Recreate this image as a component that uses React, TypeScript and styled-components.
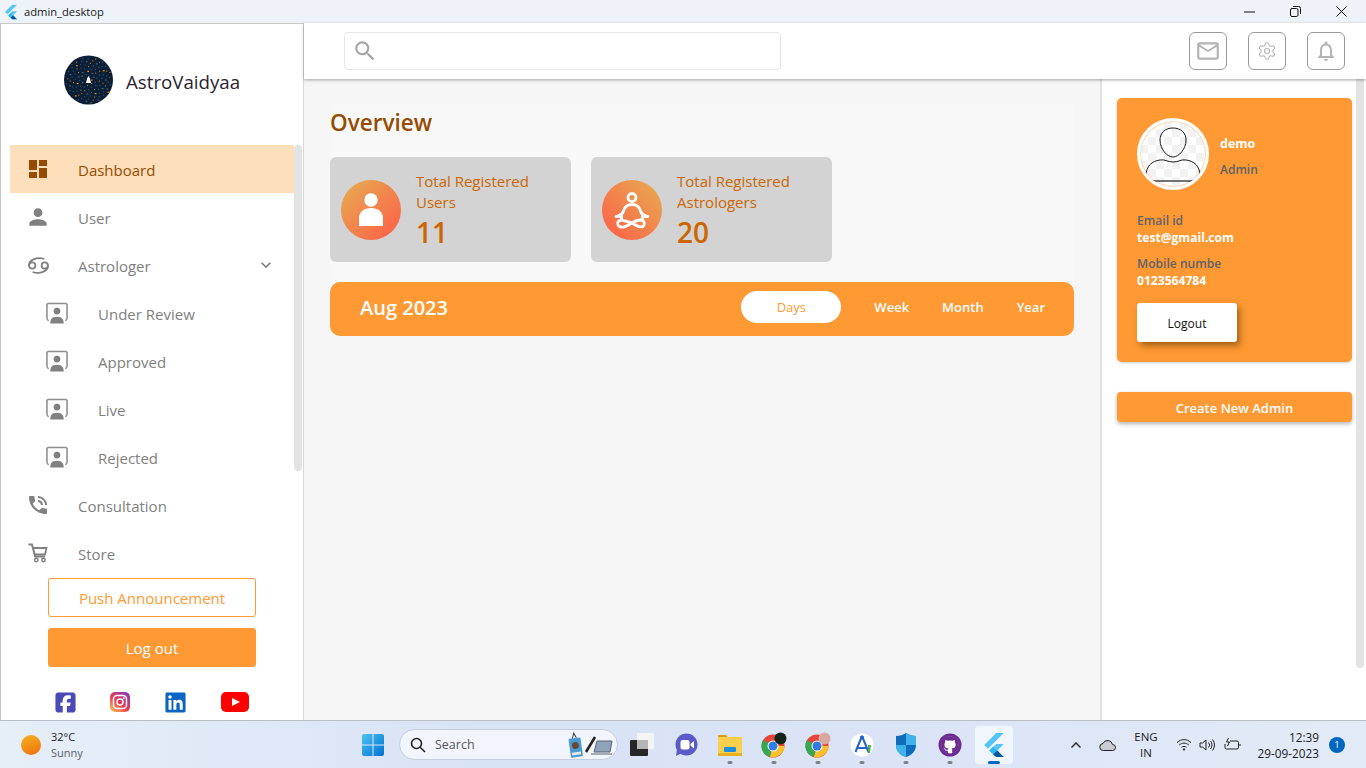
import React from "react";
import styled, { createGlobalStyle } from "styled-components";
import {
  MdDashboard,
  MdPerson,
  MdPhoneInTalk,
  MdKeyboardArrowDown,
  MdOutlineEmail,
  MdOutlineNotifications,
  MdSearch,
} from "react-icons/md";
import { TbZodiacCancer } from "react-icons/tb";
import { FaLinkedin, FaGithub } from "react-icons/fa";
import { FaSquareFacebook } from "react-icons/fa6";
import { Settings } from "lucide-react";

const GlobalStyle = createGlobalStyle`
  html, body { margin: 0; padding: 0; height: 100%; overflow: hidden; }
  body { font-family: "Open Sans", "Noto Sans", sans-serif; background: #fff; }
  * { box-sizing: border-box; }
`;

const ORANGE = "#ff9933";

const Shell = styled.div`
  display: flex;
  flex-direction: column;
  width: 1366px;
  height: 768px;
  overflow: hidden;
`;

const TitleBar = styled.div`
  height: 23px;
  flex: none;
  display: flex;
  align-items: center;
  background: #eef3fa;
  padding: 0 2px 0 3px;
  font-size: 11.2px;
  color: #1a1a1a;
`;

const TitleText = styled.span`
  margin-left: 5px;
  flex: 1;
`;

const WinButton = styled.div`
  width: 46px;
  height: 23px;
  display: flex;
  align-items: center;
  justify-content: center;
`;

const Main = styled.div`
  flex: 1;
  display: flex;
  min-height: 0;
`;

const Sidebar = styled.aside`
  position: relative;
  width: 304px;
  flex: none;
  background: #fff;
  border-left: 1px solid #c4c4c4;
  border-right: 1px solid #d8d8d8;
  border-top: 1px solid #c8c8c8;
  display: flex;
  flex-direction: column;
`;

const SideThumb = styled.div`
  position: absolute;
  left: 293px;
  top: 121px;
  width: 8px;
  height: 326px;
  border-radius: 4px;
  background: #e3e3e3;
`;

const Brand = styled.div`
  height: 121px;
  display: flex;
  align-items: center;
  padding: 0 0 10px 63px;
  gap: 13px;
  flex: none;
  font-size: 18.7px;
  color: #2b2233;
`;

const BrandName = styled.span`
  margin-top: 4px;
`;

const Nav = styled.nav`
  padding-left: 9px;
  width: 293px;
  flex: none;
`;

const NavItem = styled.div<{ $active?: boolean; $sub?: boolean }>`
  height: 48px;
  display: flex;
  align-items: center;
  gap: 30px;
  padding-left: ${(p) => (p.$sub ? "36px" : "18px")};
  background: ${(p) => (p.$active ? "#fedfbb" : "transparent")};
  color: ${(p) => (p.$active ? "#964b00" : "#808080")};
  font-size: 15px;
`;

const NavLabel = styled.span`
  margin-top: 2px;
`;

const NavIcon = styled.span<{ $sub?: boolean }>`
  width: ${(p) => (p.$sub ? "22px" : "20px")};
  height: 22px;
  display: flex;
  align-items: center;
  justify-content: center;
  flex: none;
  svg { display: block; flex: none; }
`;

const NavChevron = styled.span`
  margin-left: auto;
  padding-right: 18px;
  display: flex;
  color: #808080;
`;

const SideButtons = styled.div`
  margin: 1px 0 0 47px;
  width: 208px;
  display: flex;
  flex-direction: column;
  gap: 11px;
`;

const SideButton = styled.button<{ $filled?: boolean }>`
  height: 39px;
  border-radius: 3px;
  border: 1px solid ${ORANGE};
  background: ${(p) => (p.$filled ? ORANGE : "#fff")};
  color: ${(p) => (p.$filled ? "#fff" : ORANGE)};
  font: inherit;
  font-size: 15px;
  padding: 0;
`;

const Socials = styled.div`
  margin: 25px 0 0 54px;
  display: flex;
  align-items: center;
  height: 20px;
  gap: 35px;
`;

const SocialSlot = styled.span<{ $wide?: boolean }>`
  width: ${(p) => (p.$wide ? "28px" : "20px")};
  margin-left: ${(p) => (p.$wide ? "1px" : "0")};
  height: 20px;
  display: flex;
  align-items: center;
  justify-content: center;
  svg { display: block; flex: none; }
`;

const Workspace = styled.div`
  flex: 1;
  display: flex;
  flex-direction: column;
  min-width: 0;
`;

const TopBar = styled.header`
  position: relative;
  z-index: 2;
  height: 56px;
  flex: none;
  background: #fff;
  display: flex;
  align-items: center;
  padding: 0 21px 0 40px;
  box-shadow: 0 1px 3px rgba(0, 0, 0, 0.35);
`;

const SearchBox = styled.div`
  width: 437px;
  height: 38px;
  border: 1px solid #e6e6e6;
  border-radius: 4px;
  display: flex;
  align-items: center;
  padding-left: 7px;
  color: #a6a6a6;
`;

const TopActions = styled.div`
  margin-left: auto;
  display: flex;
  gap: 21px;
`;

const ActionButton = styled.div`
  width: 38px;
  height: 38px;
  border: 1px solid #9a9a9a;
  border-radius: 6px;
  display: flex;
  align-items: center;
  justify-content: center;
  color: #b4b4b4;
`;

const Body = styled.div`
  flex: 1;
  display: flex;
  min-height: 0;
`;

const Center = styled.main`
  flex: 1;
  background: #f6f6f6;
  padding: 25px 26px 0;
  min-width: 0;
`;

const Panel = styled.div`
  background: #f8f8f8;
  display: flex;
  flex-direction: column;
`;

const Heading = styled.h1`
  margin: 0;
  height: 53px;
  line-height: 38px;
  font-size: 22.5px;
  font-weight: 600;
  color: #964b00;
`;

const StatRow = styled.div`
  display: flex;
  gap: 20px;
`;

const StatCard = styled.div`
  width: 241px;
  height: 105px;
  background: #d3d3d3;
  border-radius: 6px;
  display: flex;
  align-items: center;
  padding-left: 11px;
  gap: 15px;
`;

const StatBadge = styled.div<{ $flip?: boolean }>`
  width: 60px;
  height: 60px;
  flex: none;
  border-radius: 50%;
  background: linear-gradient(${(p) => (p.$flip ? "225deg" : "135deg")}, #e6ae52, #ff5c47);
  svg { display: block; }
`;

const StatText = styled.div`
  color: #cc6600;
  font-size: 15px;
  line-height: 21px;
  margin-top: 2px;
`;

const StatValue = styled.div`
  font-size: 28px;
  font-weight: 600;
  line-height: 38px;
`;

const DateBar = styled.div`
  margin-top: 20px;
  height: 54px;
  border-radius: 10px;
  background: ${ORANGE};
  display: flex;
  align-items: center;
  padding: 0 29px 0 30px;
  color: #fff;
`;

const DateLabel = styled.div`
  font-size: 20px;
  font-weight: 600;
  flex: 1;
  margin-bottom: 4px;
`;

const RangeTab = styled.div<{ $active?: boolean }>`
  width: ${(p) => (p.$active ? "100px" : "auto")};
  height: 32px;
  margin: 0 0 4px ${(p) => (p.$active ? "0" : "33px")};
  border-radius: 16px;
  display: flex;
  align-items: center;
  justify-content: center;
  font-size: 13px;
  font-weight: ${(p) => (p.$active ? 400 : 600)};
  background: ${(p) => (p.$active ? "#fff" : "transparent")};
  color: ${(p) => (p.$active ? ORANGE : "#fff")};
`;

const RightPanel = styled.section`
  position: relative;
  width: 266px;
  flex: none;
  background: #fff;
  border-left: 2px solid #e2e2e2;
  padding: 19px 0 0 15px;
`;

const RightThumb = styled.div`
  position: absolute;
  right: 2px;
  top: 0;
  width: 8px;
  height: 589px;
  background: #e3e3e3;
  border-radius: 0 0 4px 4px;
`;

const ProfileCard = styled.div`
  width: 235px;
  height: 264px;
  background: ${ORANGE};
  border-radius: 5px;
  padding: 20px;
  box-shadow: 0 1px 3px rgba(0, 0, 0, 0.2);
  display: flex;
  flex-direction: column;
`;

const ProfileHead = styled.div`
  display: flex;
  align-items: center;
  gap: 11px;
`;

const ProfileNames = styled.div`
  padding-top: 6px;
`;

const Avatar = styled.div`
  width: 72px;
  height: 72px;
  flex: none;
  border-radius: 50%;
  border: 3px solid #fff;
  box-shadow: inset 0 0 0 1px #fbd7ad;
  background-color: #fff;
  background-image: conic-gradient(#f2f2f2 25%, #fff 0 50%, #f2f2f2 0 75%, #fff 0);
  background-size: 16px 16px;
  overflow: hidden;
  svg { display: block; }
`;

const ProfileName = styled.div`
  color: #fff;
  font-size: 12.5px;
  font-weight: 700;
  line-height: 18px;
`;

const ProfileRole = styled.div`
  color: #5f6368;
  font-size: 12px;
  font-weight: 600;
  line-height: 18px;
  margin-top: 8px;
`;

const Fields = styled.div`
  margin-top: 22px;
  display: flex;
  flex-direction: column;
  gap: 9px;
`;

const Field = styled.div`
  font-size: 12.1px;
  font-weight: 600;
  line-height: 17px;
`;

const FieldLabel = styled.div`
  color: #5f6368;
`;

const FieldValue = styled.div`
  color: #fff;
  font-weight: 700;
`;

const LogoutButton = styled.button`
  margin-top: 14px;
  width: 100px;
  height: 39px;
  border: 0;
  border-radius: 3px;
  padding: 2px 0 0;
  background: #fff;
  color: #111;
  font: inherit;
  font-size: 12px;
  font-weight: 500;
  box-shadow: 3px 4px 6px rgba(120, 70, 10, 0.65);
`;

const CreateButton = styled.button`
  display: block;
  margin-top: 30px;
  width: 235px;
  height: 30px;
  border: 0;
  border-radius: 4px;
  padding: 1px 0 0;
  background: ${ORANGE};
  color: #fff;
  font: inherit;
  font-size: 13px;
  font-weight: 600;
  box-shadow: 0 2px 4px rgba(0, 0, 0, 0.3);
`;

const Taskbar = styled.footer`
  height: 48px;
  flex: none;
  position: relative;
  z-index: 3;
  display: flex;
  align-items: center;
  border-top: 1px solid #b9bdc5;
  background: linear-gradient(90deg, #e6eff8 0%, #d9e3f6 35%, #dbe4f7 65%, #e3ebf7 100%);
`;

const Weather = styled.div`
  width: 356px;
  flex: none;
  display: flex;
  align-items: center;
  gap: 10px;
  padding-left: 21px;
`;

const Sun = styled.div`
  width: 20px;
  height: 20px;
  border-radius: 50%;
  background: linear-gradient(160deg, #f2b21f, #f0700c);
`;

const WeatherText = styled.div`
  font-size: 11px;
  line-height: 16px;
  color: #1d1d1d;
`;

const WeatherSub = styled.div`
  color: #5b5f66;
`;

const TaskCenter = styled.div`
  display: flex;
  align-items: center;
  width: 664px;
  flex: none;
`;

const TaskIcon = styled.div<{ $active?: boolean; $open?: boolean }>`
  position: relative;
  width: 38px;
  height: 38px;
  margin-right: 6px;
  flex: none;
  display: flex;
  align-items: center;
  justify-content: center;
  border-radius: 4px;
  background: ${(p) => (p.$active ? "#f1f5fc" : "transparent")};
  svg { display: block; }
  &::after {
    content: "";
    display: ${(p) => (p.$open ? "block" : "none")};
    position: absolute;
    bottom: 0;
    left: 50%;
    transform: translateX(-50%);
    width: ${(p) => (p.$active ? "12px" : "5px")};
    height: 3px;
    border-radius: 2px;
    background: ${(p) => (p.$active ? "#0067c0" : "#7d828a")};
  }
`;

const StartIcon = styled(TaskIcon)`
  margin: 0 8px 0 -2px;
`;

const TaskSearch = styled.div`
  width: 219px;
  height: 31px;
  margin: 0 5px 0 -1px;
  border-radius: 16px;
  border: 1px solid #c6cddd;
  background: #f2f5fd;
  display: flex;
  align-items: center;
  padding-left: 10px;
  gap: 9px;
  font-size: 12.5px;
  color: #555;
  flex: none;
  svg { display: block; }
`;

const TaskSearchArt = styled.span`
  margin-left: auto;
  margin-right: 3px;
  display: flex;
`;

const Tray = styled.div`
  flex: 1;
  display: flex;
  align-items: center;
  color: #1c1c1c;
  svg { display: block; }
`;

const ChevronUp = styled.svg`
  margin-left: 50px;
`;

const TrayGlyph = styled.svg<{ $gap: number }>`
  margin-left: ${(p) => p.$gap}px;
`;

const Lang = styled.div`
  width: 30px;
  margin-left: 14px;
  text-align: center;
  font-size: 11.5px;
  line-height: 16px;
`;

const Clock = styled.div`
  width: 76px;
  margin-left: 2px;
  text-align: right;
  font-size: 11.8px;
  line-height: 16px;
  flex: none;
`;

const NoticeBadge = styled.div`
  width: 16px;
  height: 16px;
  margin-left: 10px;
  border-radius: 50%;
  background: #0067c0;
  color: #fff;
  font-size: 9.5px;
  display: flex;
  align-items: center;
  justify-content: center;
`;

const FlutterLogo = ({ size = 16 }: { size?: number }) => (
  <svg width={size} height={size} viewBox="0 0 24 24">
    <path d="M14 1 3 12l3.400 3.400L21 1z" fill="#54c5f8" />
    <path d="M14 11l-6.200 6.100 3.400 3.400 2.800 2.500H21l-6-6 6-6z" fill="#54c5f8" />
    <path d="M11.200 20.500 14 23h7l-6-6z" fill="#01579b" />
    <path d="M7.800 17.100 11.200 13.700l3.400 3.400-3.400 3.400z" fill="#29b6f6" />
  </svg>
);

const Stars = () => {
  const dots: React.ReactElement[] = [];
  for (let i = 0; i < 110; i++) {
    const a = i * 2.399;
    const r = 23 * Math.sqrt((i + 1) / 110);
    dots.push(
      <rect
        key={i}
        x={24.5 + r * Math.cos(a)}
        y={24.5 + r * Math.sin(a)}
        width={i % 5 === 0 ? 1.8 : 1}
        height={i % 5 === 0 ? 1.2 : 1}
        fill={i % 3 === 0 ? "#f08a1d" : "#46627c"}
      />
    );
  }
  return (
    <svg width="49" height="50" viewBox="0 0 49 50" style={{ flex: "none" }}>
      <circle cx="24.5" cy="25" r="24.5" fill="#0b2036" />
      {dots}
      <path d="M24.500 21l1.400 2.500 1.100 4.500h-5l1.100-4.500z" fill="#fff" />
    </svg>
  );
};

const ReviewIcon = () => (
  <svg width="22" height="23" viewBox="0 0 23 23" fill="none">
    <path d="M1 17.500V2.600A1.600 1.600 0 0 1 2.600 1h17.800A1.600 1.600 0 0 1 22 2.600v14.900" stroke="#8c8c8c" strokeWidth="1.600" />
    <path d="M1 17.500l1.800 1.500M22 17.500 20.200 19" stroke="#8c8c8c" strokeWidth="1.300" />
    <circle cx="11.500" cy="9" r="3.500" fill="#808080" />
    <path d="M4.500 22c0-4 1.500-7 7-7s7 3 7 7z" fill="#808080" />
  </svg>
);

const CartIcon = () => (
  <svg width="20" height="20" viewBox="0 0 20 20" fill="none" stroke="#808080">
    <path d="M.5 1.500h3.500L7.200 13.500H17" strokeWidth="2" />
    <path d="M5 5h13.500L17 11.500H7" strokeWidth="1.800" />
    <circle cx="8.300" cy="17" r="1.700" strokeWidth="1.500" />
    <circle cx="15.500" cy="17" r="1.700" strokeWidth="1.500" />
  </svg>
);

const InstagramIcon = () => (
  <svg width="20" height="20" viewBox="0 0 20 20">
    <defs>
      <linearGradient id="ig" x1="0.1" y1="1" x2="0.9" y2="0">
        <stop offset="0" stopColor="#fdc04f" />
        <stop offset="0.45" stopColor="#f0394f" />
        <stop offset="1" stopColor="#7b3bc4" />
      </linearGradient>
    </defs>
    <rect width="20" height="20" rx="5" fill="url(#ig)" />
    <rect x="3.500" y="3.500" width="13" height="13" rx="3.500" fill="none" stroke="#fff" strokeWidth="1.500" />
    <circle cx="10" cy="10" r="3" fill="none" stroke="#fff" strokeWidth="1.500" />
    <circle cx="13.800" cy="6.200" r="0.900" fill="#fff" />
  </svg>
);

const YoutubeIcon = () => (
  <svg width="28" height="20" viewBox="0 0 28 20">
    <rect width="28" height="20" rx="5" fill="#f00" />
    <path d="M11 6l8 4-8 4z" fill="#fff" />
  </svg>
);

const MeditationIcon = () => (
  <svg width="60" height="60" viewBox="0 0 60 60" fill="none" stroke="#fff" strokeWidth="2.800" strokeLinecap="round" strokeLinejoin="round">
    <circle cx="30" cy="17.500" r="4" />
    <path d="M30 24.500c-5 0-7.500 3-8.500 6.500-.8 3-2.500 4.500-7.500 5.500h5.500" />
    <path d="M30 24.500c5 0 7.500 3 8.500 6.500.8 3 2.500 4.500 7.500 5.500h-5.500" />
    <path d="M19.500 36.500c-1 2.500 1 4.500 4 4.500 3 .5 7 2 11 4.500 3 2 6.500 2 7.500-.5 1-3-1-5-3-5-4 0-8 2-11 4-3 2-6 4-9 3-3-.5-4-3.500-3-5 .5-1 1.500-1.500 2.500-1.500" />
    <path d="M40.500 36.500c.5 1.500 0 2.500-1 3.500" />
  </svg>
);

const UserBadgeIcon = () => (
  <svg width="60" height="60" viewBox="0 0 60 60" fill="#fff">
    <circle cx="30" cy="20" r="6.700" />
    <path d="M18 46V38c0-6 5-10 12-10s12 4 12 10v8z" />
  </svg>
);

const AvatarArt = () => (
  <svg width="66" height="66" viewBox="0 0 66 66" fill="none" stroke="#1b1b1b" strokeWidth="1">
    <path d="M33 7c-8 0-13 5-13 12 0 9 7 17 13 17s13-8 13-17c0-7-5-12-13-12z" />
    <path d="M6 55c0-10 6-15 14-16 5-1 7 2 13 2s8-3 13-2c8 1 14 6 14 16" />
    <path d="M12 60h41" strokeWidth="1.500" stroke="#444" />
  </svg>
);

const WindowsLogo = () => (
  <svg width="24" height="24" viewBox="0 0 24 24">
    <defs>
      <linearGradient id="win" x1="0" y1="0" x2="1" y2="1">
        <stop offset="0" stopColor="#4cc2f5" />
        <stop offset="1" stopColor="#0071cf" />
      </linearGradient>
    </defs>
    <path d="M1 3a2 2 0 0 1 2-2h8.500v10.500H1zM12.500 1H21a2 2 0 0 1 2 2v8.500H12.500zM1 12.500h10.500V23H3a2 2 0 0 1-2-2zM12.500 12.500H23V21a2 2 0 0 1-2 2h-8.500z" fill="url(#win)" />
  </svg>
);

const WidgetsIcon = () => (
  <svg width="24" height="24" viewBox="0 0 24 24">
    <rect x="0" y="7" width="18" height="16" rx="1" fill="#262626" />
    <rect x="7" y="0" width="17" height="16" rx="1" fill="#f4f4f4" />
    <rect x="7" y="7" width="11" height="9" fill="#b5b5b5" />
  </svg>
);

const MeetIcon = () => (
  <svg width="24" height="24" viewBox="0 0 24 24">
    <circle cx="12.500" cy="11.500" r="11" fill="#5a5ac8" />
    <path d="M3 16l-1 7 6-3z" fill="#5a5ac8" />
    <rect x="6.500" y="7" width="9" height="9.500" rx="2" fill="#fff" />
    <path d="M16.500 11l3.500-3v7.500l-3.500-3z" fill="#fff" />
  </svg>
);

const FolderIcon = () => (
  <svg width="24" height="24" viewBox="0 0 24 24">
    <path d="M0 3a1 1 0 0 1 1-1h7l2 2.500h-10z" fill="#d99a18" />
    <rect x="0" y="4" width="24" height="18" rx="1" fill="#f9cf4d" />
    <rect x="6" y="14" width="12" height="5" rx="1" fill="#1c8fdc" />
    <rect x="0" y="20" width="24" height="3" fill="#eab11f" />
  </svg>
);

const ChromeIcon = ({ dot }: { dot: string }) => (
  <svg width="26" height="26" viewBox="0 0 26 26">
    <circle cx="12" cy="14" r="11.500" fill="#e7453a" />
    <path d="M12 14 2 8A11.500 11.500 0 0 0 9 25z" fill="#35a853" />
    <path d="M12 14 23.500 14A11.500 11.500 0 0 1 9 25z" fill="#fbc02d" />
    <circle cx="12" cy="14" r="5.500" fill="#fff" />
    <circle cx="12" cy="14" r="4.500" fill="#2f7de1" />
    <circle cx="19.500" cy="6.500" r="6" fill={dot} />
  </svg>
);

const XcodeIcon = () => (
  <svg width="24" height="24" viewBox="0 0 24 24" fill="none">
    <circle cx="12" cy="12" r="11.500" fill="#fff" />
    <path d="M12 3l-6.500 16M12 3l6.500 16M7 15h10" stroke="#2563c9" strokeWidth="2" />
    <circle cx="12" cy="4.500" r="2" fill="#2563c9" />
    <path d="M18 12h3l-1 8h-2z" fill="#4caf50" />
  </svg>
);

const ShieldIcon = () => (
  <svg width="24" height="24" viewBox="0 0 24 24">
    <path d="M12 0c3 2 6 3 10 3v9c0 6-4 10-10 12C6 22 2 18 2 12V3c4 0 7-1 10-3z" fill="#0f6cbd" />
    <path d="M12 0c3 2 6 3 10 3v9H12zM2 12h10v12C6 22 2 18 2 12z" fill="#3fb2ec" />
  </svg>
);

const GithubBadge = () => (
  <svg width="24" height="24" viewBox="0 0 24 24">
    <circle cx="12" cy="12" r="11.500" fill="#6b2b8f" />
    <circle cx="12" cy="12" r="8.500" fill="#fff" />
    <foreignObject x="3" y="3" width="18" height="18">
      <FaGithub size={18} color="#6b2b8f" />
    </foreignObject>
  </svg>
);

const SearchArt = () => (
  <svg width="46" height="26" viewBox="0 0 46 26" fill="none">
    <g transform="rotate(-8 8 14)">
      <rect x="1.500" y="6" width="12" height="19" rx="1" fill="#4a9bd1" />
      <circle cx="7.500" cy="13.500" r="3.500" fill="#6b4a35" />
      <rect x="3" y="20" width="9" height="3" fill="#e8e8e8" />
      <path d="M5.500 6l2-5 2 5" stroke="#3a3a3a" />
    </g>
    <path d="M18 20 27 5" stroke="#222" strokeWidth="2.500" />
    <path d="M29 9h15l-2 11H26z" fill="#8fa4b8" stroke="#5a6570" />
    <path d="M23 22h21" stroke="#8d939b" strokeWidth="1.500" />
  </svg>
);

const reviewItems = ["Under Review", "Approved", "Live", "Rejected"];

export default function App() {
  return (
    <Shell>
      <GlobalStyle />
      <TitleBar>
        <FlutterLogo />
        <TitleText>admin_desktop</TitleText>
        <WinButton>
          <svg width="11" height="2" viewBox="0 0 11 2"><path d="M0 1h11" stroke="#111" /></svg>
        </WinButton>
        <WinButton>
          <svg width="11" height="11" viewBox="0 0 11 11" fill="none" stroke="#111">
            <rect x="0.500" y="2.500" width="7.500" height="8" rx="1.500" />
            <path d="M3 .5h5.500a2 2 0 0 1 2 2V8" />
          </svg>
        </WinButton>
        <WinButton>
          <svg width="11" height="11" viewBox="0 0 11 11" stroke="#111"><path d="M.5.5l10 10M10.500.5l-10 10" /></svg>
        </WinButton>
      </TitleBar>
      <Main>
        <Sidebar>
          <Brand>
            <Stars />
            <BrandName>AstroVaidyaa</BrandName>
          </Brand>
          <Nav>
            <NavItem $active>
              <NavIcon><MdDashboard size={24} color="#964b00" /></NavIcon>
              <NavLabel>Dashboard</NavLabel>
            </NavItem>
            <NavItem>
              <NavIcon><MdPerson size={26} color="#808080" /></NavIcon>
              <NavLabel>User</NavLabel>
            </NavItem>
            <NavItem>
              <NavIcon><TbZodiacCancer size={25} color="#808080" strokeWidth={1.7} /></NavIcon>
              <NavLabel>Astrologer</NavLabel>
              <NavChevron><MdKeyboardArrowDown size={20} /></NavChevron>
            </NavItem>
            {reviewItems.map((label) => (
              <NavItem $sub key={label}>
                <NavIcon $sub><ReviewIcon /></NavIcon>
                <NavLabel>{label}</NavLabel>
              </NavItem>
            ))}
            <NavItem>
              <NavIcon><MdPhoneInTalk size={24} color="#808080" /></NavIcon>
              <NavLabel>Consultation</NavLabel>
            </NavItem>
            <NavItem>
              <NavIcon><CartIcon /></NavIcon>
              <NavLabel>Store</NavLabel>
            </NavItem>
          </Nav>
          <SideButtons>
            <SideButton>Push Announcement</SideButton>
            <SideButton $filled>Log out</SideButton>
          </SideButtons>
          <Socials>
            <SocialSlot><FaSquareFacebook size={23} color="#4b49b6" /></SocialSlot>
            <SocialSlot><InstagramIcon /></SocialSlot>
            <SocialSlot><FaLinkedin size={23} color="#0a66c2" /></SocialSlot>
            <SocialSlot $wide><YoutubeIcon /></SocialSlot>
          </Socials>
          <SideThumb />
        </Sidebar>
        <Workspace>
          <TopBar>
            <SearchBox><MdSearch size={26} /></SearchBox>
            <TopActions>
              <ActionButton><MdOutlineEmail size={26} /></ActionButton>
              <ActionButton><Settings size={20} strokeWidth={1.3} /></ActionButton>
              <ActionButton><MdOutlineNotifications size={24} /></ActionButton>
            </TopActions>
          </TopBar>
          <Body>
            <Center>
              <Panel>
                <Heading>Overview</Heading>
                <StatRow>
                  <StatCard>
                    <StatBadge><UserBadgeIcon /></StatBadge>
                    <StatText>
                      Total Registered<br />Users
                      <StatValue>11</StatValue>
                    </StatText>
                  </StatCard>
                  <StatCard>
                    <StatBadge $flip><MeditationIcon /></StatBadge>
                    <StatText>
                      Total Registered<br />Astrologers
                      <StatValue>20</StatValue>
                    </StatText>
                  </StatCard>
                </StatRow>
                <DateBar>
                  <DateLabel>Aug 2023</DateLabel>
                  <RangeTab $active>Days</RangeTab>
                  <RangeTab>Week</RangeTab>
                  <RangeTab>Month</RangeTab>
                  <RangeTab>Year</RangeTab>
                </DateBar>
              </Panel>
            </Center>
            <RightPanel>
              <ProfileCard>
                <ProfileHead>
                  <Avatar><AvatarArt /></Avatar>
                  <ProfileNames>
                    <ProfileName>demo</ProfileName>
                    <ProfileRole>Admin</ProfileRole>
                  </ProfileNames>
                </ProfileHead>
                <Fields>
                  <Field>
                    <FieldLabel>Email id</FieldLabel>
                    <FieldValue>test@gmail.com</FieldValue>
                  </Field>
                  <Field>
                    <FieldLabel>Mobile numbe</FieldLabel>
                    <FieldValue>0123564784</FieldValue>
                  </Field>
                </Fields>
                <LogoutButton>Logout</LogoutButton>
              </ProfileCard>
              <CreateButton>Create New Admin</CreateButton>
              <RightThumb />
            </RightPanel>
          </Body>
        </Workspace>
      </Main>
      <Taskbar>
        <Weather>
          <Sun />
          <WeatherText>
            32°C
            <WeatherSub>Sunny</WeatherSub>
          </WeatherText>
        </Weather>
        <TaskCenter>
          <StartIcon><WindowsLogo /></StartIcon>
          <TaskSearch>
            <svg width="16" height="16" viewBox="0 0 16 16" fill="none" stroke="#222" strokeWidth="1.600">
              <circle cx="6.500" cy="6.500" r="5" /><path d="M10.200 10.200 15 15" />
            </svg>
            Search
            <TaskSearchArt><SearchArt /></TaskSearchArt>
          </TaskSearch>
          <TaskIcon><WidgetsIcon /></TaskIcon>
          <TaskIcon><MeetIcon /></TaskIcon>
          <TaskIcon $open><FolderIcon /></TaskIcon>
          <TaskIcon $open><ChromeIcon dot="#14241a" /></TaskIcon>
          <TaskIcon $open><ChromeIcon dot="#d9a9a0" /></TaskIcon>
          <TaskIcon $open><XcodeIcon /></TaskIcon>
          <TaskIcon $open><ShieldIcon /></TaskIcon>
          <TaskIcon $open><GithubBadge /></TaskIcon>
          <TaskIcon $active $open><FlutterLogo size={26} /></TaskIcon>
        </TaskCenter>
        <Tray>
          <ChevronUp width="12" height="8" viewBox="0 0 12 8" fill="none" stroke="#222" strokeWidth="1.300">
            <path d="M1.500 6.500 6 2l4.500 4.500" />
          </ChevronUp>
          <TrayGlyph $gap={17} width="18" height="14" viewBox="0 0 18 14" fill="#c9cdd3" stroke="#222">
            <path d="M4.500 12.500a3.500 3.500 0 0 1-.5-7 5 5 0 0 1 9.500 1 3 3 0 0 1 0 6z" />
          </TrayGlyph>
          <Lang>ENG<br />IN</Lang>
          <TrayGlyph $gap={15} width="16" height="13" viewBox="0 0 16 13" fill="none" stroke="#222">
            <path d="M1 4.500c4-3.800 10-3.800 14 0M3.200 7c2.800-2.500 6.800-2.500 9.600 0M5.500 9.300c1.500-1.200 3.500-1.200 5 0" />
            <circle cx="8" cy="11.500" r=".7" fill="#222" />
          </TrayGlyph>
          <TrayGlyph $gap={7} width="16" height="14" viewBox="0 0 16 14" fill="none" stroke="#222">
            <path d="M1 5h2.500L7 2v10L3.500 9H1zM9.500 4.500a3.500 3.500 0 0 1 0 5M11.500 3a6 6 0 0 1 0 8M13.500 1.500a8.500 8.500 0 0 1 0 11" />
          </TrayGlyph>
          <TrayGlyph $gap={9} width="17" height="13" viewBox="0 0 17 13" fill="none" stroke="#222">
            <path d="M6 3H13a1.500 1.500 0 0 1 1.500 1.500v5A1.500 1.500 0 0 1 13 11H2.500A1.500 1.500 0 0 1 1 9.500V6M16 6v2M4.500 0 2.500 4h3L3.500 8" />
          </TrayGlyph>
          <Clock>12:39<br />29-09-2023</Clock>
          <NoticeBadge>1</NoticeBadge>
        </Tray>
      </Taskbar>
    </Shell>
  );
}
